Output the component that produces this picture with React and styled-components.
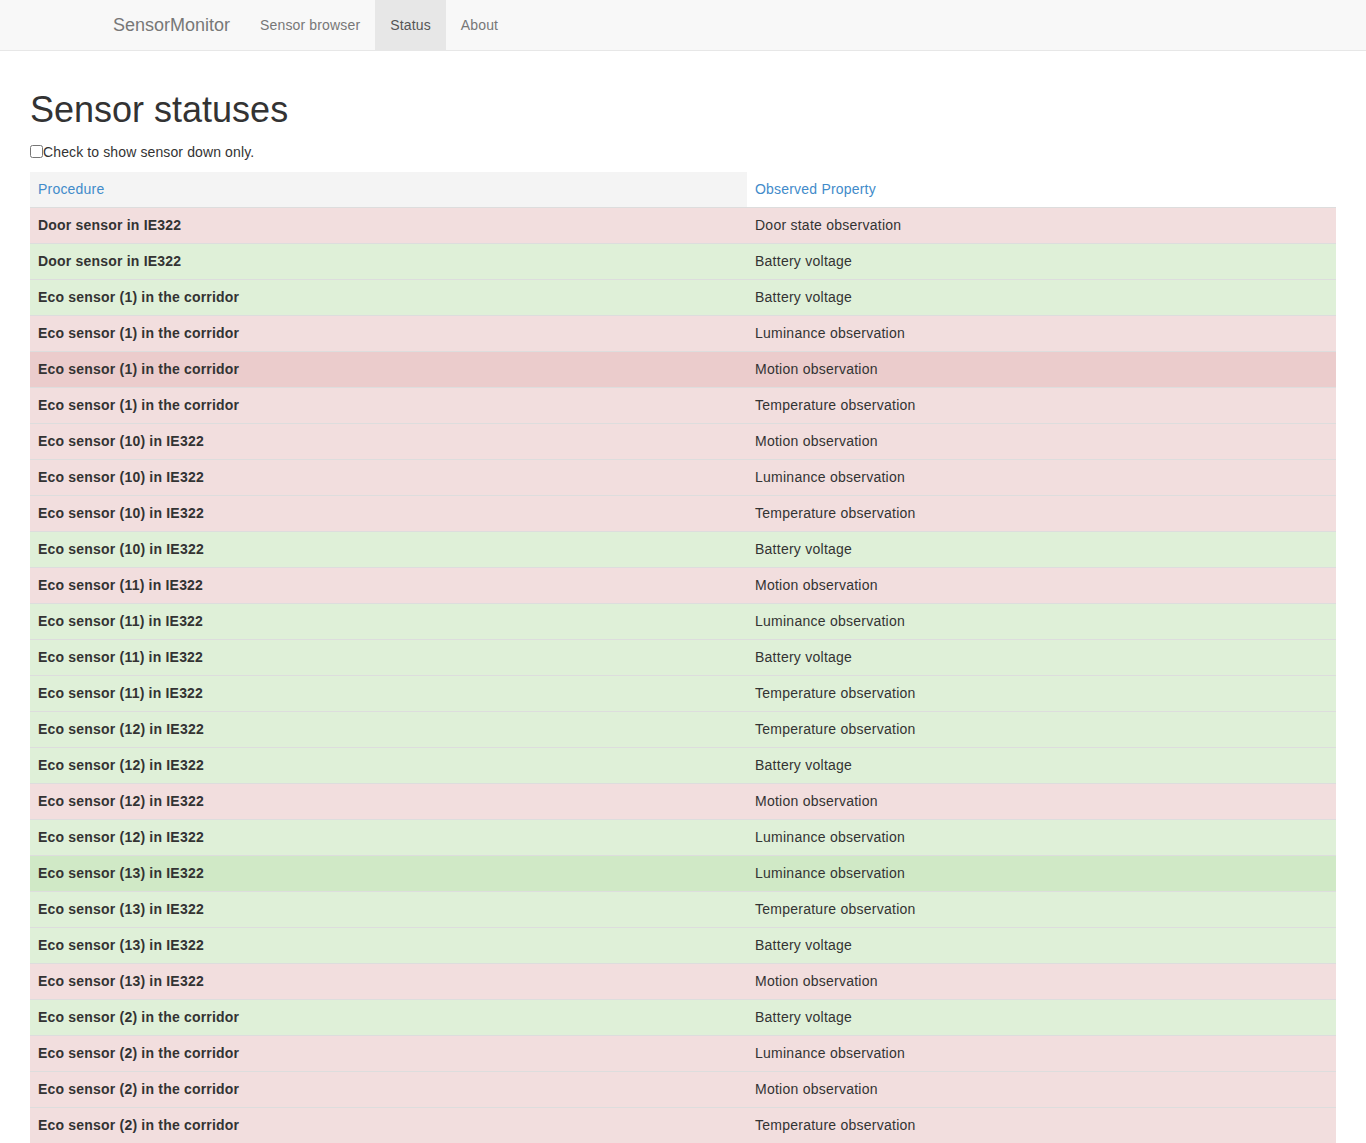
import React from 'react';
import styled, { createGlobalStyle } from 'styled-components';

const GlobalStyle = createGlobalStyle`
  * { box-sizing: border-box; }
  body {
    margin: 0;
    font-family: "Liberation Sans", Arial, sans-serif;
    font-size: 14px;
    line-height: 20px;
    letter-spacing: 0.2px;
    color: #333;
    background: #fff;
  }
`;

const Navbar = styled.nav`
  height: 51px;
  background: #f8f8f8;
  border-bottom: 1px solid #e7e7e7;
`;

const NavContainer = styled.div`
  width: 1170px;
  margin: 0 auto;
  padding: 0 15px;
  display: flex;
  align-items: stretch;
`;

const Brand = styled.a`
  margin-left: -15px;
  padding: 15px;
  height: 50px;
  font-size: 18px;
  line-height: 20px;
  letter-spacing: 0;
  color: #777;
  text-decoration: none;
`;

const NavItem = styled.a`
  padding: 15px;
  height: 50px;
  line-height: 20px;
  letter-spacing: 0.15px;
  color: ${(p) => (p.$active ? '#555' : '#777')};
  background: ${(p) => (p.$active ? '#e7e7e7' : 'transparent')};
  text-decoration: none;
`;

const Main = styled.div`
  padding: 19px 30px 0;
`;

const Title = styled.h1`
  margin: 20px 0 10px;
  font-size: 36px;
  line-height: 1.1;
  font-weight: 500;
  letter-spacing: 0;
  color: #333;
`;

const FilterLabel = styled.label`
  display: flex;
  align-items: flex-start;
  height: 22px;
  padding-top: 2px;
  margin-bottom: 10px;
  font-weight: normal;
  letter-spacing: 0.12px;
`;

const Check = styled.input`
  width: 13px;
  height: 13px;
  margin: 3px 0 0;
`;

const Table = styled.table`
  width: 1306px;
  border-collapse: collapse;
  border-spacing: 0;
`;

const HeadCell = styled.th`
  text-align: left;
  font-weight: normal;
  padding: 8px;
  line-height: 19px;
  border-bottom: 1px solid #ddd;
  background: ${(p) => (p.$sorted ? '#f4f4f4' : '#fff')};
  width: ${(p) => p.$w};
`;

const HeadLink = styled.a`
  color: #428bca;
  text-decoration: none;
`;

const colors = {
  danger: ['#f2dede', '#ebcccc'],
  success: ['#dff0d8', '#d0e9c6'],
};

const Row = styled.tr`
  background: ${(p) => colors[p.$status][p.$hover ? 1 : 0]};
`;

const Cell = styled.td`
  padding: 8px;
  line-height: 19px;
  border-top: 1px solid #ddd;
  font-weight: ${(p) => (p.$bold ? 'bold' : 'normal')};
  letter-spacing: ${(p) => (p.$bold ? '0.2px' : '0.25px')};
`;

const rows = [
  ['Door sensor in IE322', 'Door state observation', 'danger'],
  ['Door sensor in IE322', 'Battery voltage', 'success'],
  ['Eco sensor (1) in the corridor', 'Battery voltage', 'success'],
  ['Eco sensor (1) in the corridor', 'Luminance observation', 'danger'],
  ['Eco sensor (1) in the corridor', 'Motion observation', 'danger', true],
  ['Eco sensor (1) in the corridor', 'Temperature observation', 'danger'],
  ['Eco sensor (10) in IE322', 'Motion observation', 'danger'],
  ['Eco sensor (10) in IE322', 'Luminance observation', 'danger'],
  ['Eco sensor (10) in IE322', 'Temperature observation', 'danger'],
  ['Eco sensor (10) in IE322', 'Battery voltage', 'success'],
  ['Eco sensor (11) in IE322', 'Motion observation', 'danger'],
  ['Eco sensor (11) in IE322', 'Luminance observation', 'success'],
  ['Eco sensor (11) in IE322', 'Battery voltage', 'success'],
  ['Eco sensor (11) in IE322', 'Temperature observation', 'success'],
  ['Eco sensor (12) in IE322', 'Temperature observation', 'success'],
  ['Eco sensor (12) in IE322', 'Battery voltage', 'success'],
  ['Eco sensor (12) in IE322', 'Motion observation', 'danger'],
  ['Eco sensor (12) in IE322', 'Luminance observation', 'success'],
  ['Eco sensor (13) in IE322', 'Luminance observation', 'success', true],
  ['Eco sensor (13) in IE322', 'Temperature observation', 'success'],
  ['Eco sensor (13) in IE322', 'Battery voltage', 'success'],
  ['Eco sensor (13) in IE322', 'Motion observation', 'danger'],
  ['Eco sensor (2) in the corridor', 'Battery voltage', 'success'],
  ['Eco sensor (2) in the corridor', 'Luminance observation', 'danger'],
  ['Eco sensor (2) in the corridor', 'Motion observation', 'danger'],
  ['Eco sensor (2) in the corridor', 'Temperature observation', 'danger'],
];

const App = () => {
  return (
    <>
      <GlobalStyle />
      <Navbar>
        <NavContainer>
          <Brand href="#">SensorMonitor</Brand>
          <NavItem href="#">Sensor browser</NavItem>
          <NavItem href="#" $active>
            Status
          </NavItem>
          <NavItem href="#">About</NavItem>
        </NavContainer>
      </Navbar>
      <Main>
        <Title>Sensor statuses</Title>
        <FilterLabel>
          <Check type="checkbox" />
          Check to show sensor down only.
        </FilterLabel>
        <Table>
          <thead>
            <tr>
              <HeadCell $sorted $w="717px">
                <HeadLink href="#">Procedure</HeadLink>
              </HeadCell>
              <HeadCell>
                <HeadLink href="#">Observed Property</HeadLink>
              </HeadCell>
            </tr>
          </thead>
          <tbody>
            {rows.map(([procedure, property, status, hover], idx) => (
              <Row key={idx} $status={status} $hover={hover}>
                <Cell $bold>{procedure}</Cell>
                <Cell>{property}</Cell>
              </Row>
            ))}
          </tbody>
        </Table>
      </Main>
    </>
  );
};

export default App;
